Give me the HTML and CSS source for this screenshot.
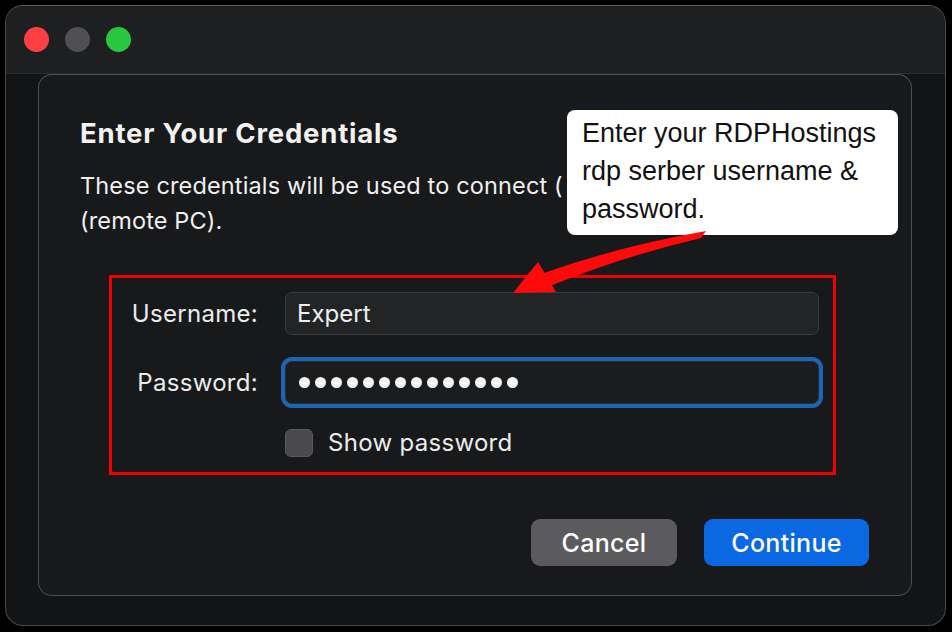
FILE: index.html
```html
<!DOCTYPE html>
<html lang="en">
<head>
    <meta charset="UTF-8">
    <meta name="viewport" content="width=device-width, initial-scale=1.0">
    <title>Enter Your Credentials</title>
    <link rel="stylesheet" href="styles.css">
</head>
<body>
    <div class="window">
        <!-- Title bar with traffic lights -->
        <div class="titlebar">
            <span class="light red"></span>
            <span class="light grey"></span>
            <span class="light green"></span>
        </div>

        <div class="window-body">
            <div class="dialog">
                <h1>Enter Your Credentials</h1>
                <p class="desc">
                    <span class="desc-line">These credentials will be used to connect (</span>
                    <span>(remote PC).</span>
                </p>

                <!-- Highlighted form -->
                <div class="form-box">
                    <div class="form-grid">
                        <label class="field-label">Username:</label>
                        <div class="field">Expert</div>

                        <label class="field-label">Password:</label>
                        <div class="field focused">
                            <span class="dot"></span><span class="dot"></span><span class="dot"></span><span class="dot"></span><span class="dot"></span><span class="dot"></span><span class="dot"></span><span class="dot"></span><span class="dot"></span><span class="dot"></span><span class="dot"></span><span class="dot"></span><span class="dot"></span><span class="dot"></span>
                        </div>

                        <span></span>
                        <div class="check-row">
                            <span class="checkbox"></span>
                            <span>Show password</span>
                        </div>
                    </div>
                </div>

                <div class="actions">
                    <button class="btn cancel">Cancel</button>
                    <button class="btn primary">Continue</button>
                </div>
            </div>
        </div>
    </div>

    <!-- Annotation -->
    <div class="callout">Enter your RDPHostings rdp serber username &amp; password.</div>
    <svg class="arrow" width="952" height="632" viewBox="0 0 952 632">
        <path d="M544 273 Q620 246 706 231 L701 238 Q624 256 550 286 Z" fill="#ff0a0a"/>
        <path d="M513 293 L538 262 L556 292 Z" fill="#ff0a0a"/>
    </svg>
</body>
</html>
```

FILE: styles.css
```css
/* Page */
body {
    margin: 0;
    padding: 5px;
    background-color: #000;
    font-family: 'Inter', 'Noto Sans', sans-serif;
    color: #f2f2f2;
}

/* Window frame */
.window {
    width: 939px;
    height: 619px;
    border: 1px solid #47484a;
    border-top-color: #5a5b5d;
    border-radius: 18px;
    background-color: #131416;
    overflow: hidden;
    display: flex;
    flex-direction: column;
}

.titlebar {
    height: 67px;
    flex-shrink: 0;
    background-color: #1e1f21;
    border-bottom: 1px solid #2c2d2f;
    display: flex;
    align-items: center;
    gap: 16px;
    padding-left: 18px;
}

.light {
    width: 25px;
    height: 25px;
    border-radius: 50%;
}

.light.red { background-color: #fe4044; }
.light.grey { background-color: #505052; }
.light.green { background-color: #27c840; }

.window-body {
    padding: 0 33px 29px 32px;
}

/* Dialog */
.dialog {
    height: 520px;
    border: 1px solid #4b4c4e;
    border-top-color: #4f5052;
    border-radius: 14px;
    background-color: #18191b;
    padding: 0 42px 0 41px;
    display: flex;
    flex-direction: column;
}

.dialog h1 {
    font-size: 27.5px;
    font-weight: 700;
    letter-spacing: 0.8px;
    margin: 43px 0 0;
    line-height: 30px;
    color: #f2f2f2;
}

.desc {
    font-size: 23.5px;
    letter-spacing: 0.15px;
    line-height: 35px;
    margin: 20px 0 0;
    white-space: nowrap;
    color: #f0f0f0;
    display: flex;
    flex-direction: column;
}

/* first line runs under the callout, so it is cut at its edge */
.desc-line {
    width: 486px;
    overflow: hidden;
}

/* Highlighted form */
.form-box {
    margin: 37px 0 0 29px;
    width: 721px;
    height: 194px;
    border: 3px solid #f00000;
    box-sizing: content-box;
}

.form-grid {
    display: grid;
    grid-template-columns: 146px 534px;
    column-gap: 27px;
    row-gap: 26px;
    padding: 14px 0 0 0;
    align-items: center;
}

.field-label {
    font-size: 24px;
    letter-spacing: 0.3px;
    text-align: right;
    color: #ececec;
}

.field {
    height: 41px;
    border: 1px solid #3a3b3d;
    border-radius: 7px;
    background-color: #232426;
    font-size: 24px;
    line-height: 41px;
    padding: 0 11px;
    display: flex;
    align-items: center;
    gap: 5px;
    color: #f0f0f0;
}

.field.focused {
    border-color: #2a2b2d;
    background-color: #1b1c1e;
    box-shadow: 0 0 0 4px #1d65b4;
    padding-left: 13px;
}

.dot {
    width: 11px;
    height: 11px;
    border-radius: 50%;
    background-color: #f4f4f4;
}

.check-row {
    display: flex;
    align-items: center;
    gap: 15px;
    font-size: 24px;
    letter-spacing: 0.3px;
    margin-top: -2px;
    color: #ececec;
}

.checkbox {
    width: 26px;
    height: 26px;
    border: 1px solid #5a5a5c;
    border-radius: 6px;
    background-color: #4a4a4c;
}

/* Buttons */
.actions {
    margin-top: auto;
    margin-bottom: 29px;
    display: flex;
    justify-content: flex-end;
    gap: 27px;
}

.btn {
    height: 47px;
    border: none;
    border-radius: 9px;
    font-family: 'Inter', 'Noto Sans', sans-serif;
    font-size: 25px;
    font-weight: 500;
    letter-spacing: 0.3px;
    color: #fff;
    padding: 0;
}

.btn.cancel {
    width: 146px;
    background-color: #5b5b5d;
}

.btn.primary {
    width: 165px;
    background-color: #0b68e3;
}

/* Annotation over the dialog */
.callout {
    position: absolute;
    left: 567px;
    top: 110px;
    width: 331px;
    height: 125px;
    box-sizing: border-box;
    padding: 4px 10px 0 15px;
    background-color: #fff;
    border-radius: 8px;
    font-family: 'Liberation Sans', Arial, sans-serif;
    font-size: 27px;
    line-height: 38px;
    color: #111;
}

.arrow {
    position: absolute;
    left: 0;
    top: 0;
    pointer-events: none;
}
```
